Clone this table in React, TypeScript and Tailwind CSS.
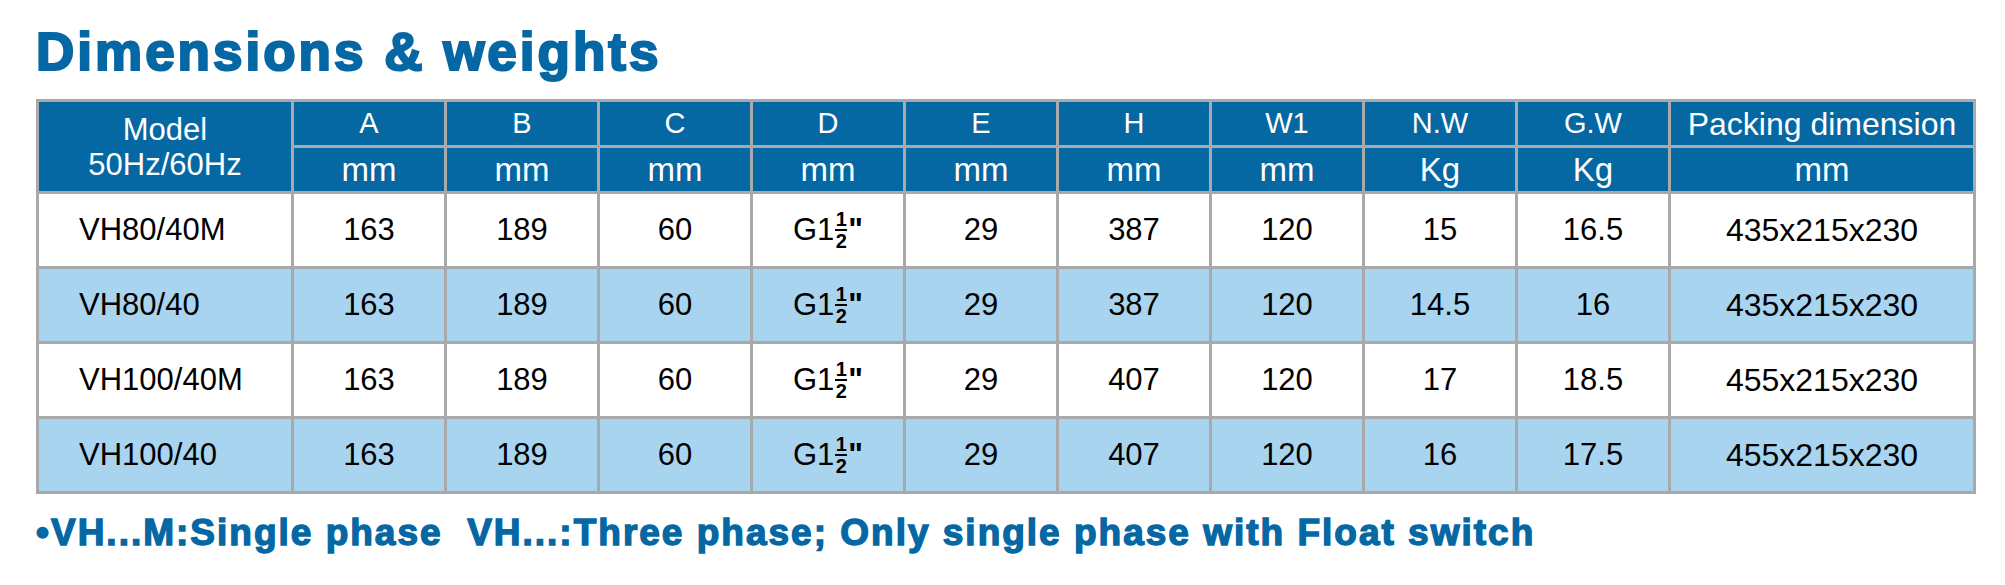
const columns = [
  { name: "A", unit: "mm" },
  { name: "B", unit: "mm" },
  { name: "C", unit: "mm" },
  { name: "D", unit: "mm" },
  { name: "E", unit: "mm" },
  { name: "H", unit: "mm" },
  { name: "W1", unit: "mm" },
  { name: "N.W", unit: "Kg" },
  { name: "G.W", unit: "Kg" },
]

const rows = [
  { model: "VH80/40M", h: "387", nw: "15", gw: "16.5", pack: "435x215x230" },
  { model: "VH80/40", h: "387", nw: "14.5", gw: "16", pack: "435x215x230" },
  { model: "VH100/40M", h: "407", nw: "17", gw: "18.5", pack: "455x215x230" },
  { model: "VH100/40", h: "407", nw: "16", gw: "17.5", pack: "455x215x230" },
]

function Thread() {
  return (
    <span className="inline-flex items-center">
      G1
      <span className="mx-[1px] inline-flex flex-col items-center text-[20px] leading-[20px] font-bold">
        <span>1</span>
        <span className="h-[2px] w-[12px] bg-black" />
        <span>2</span>
      </span>
      <span className="font-bold">"</span>
    </span>
  )
}

export default function App() {
  const cell = "border-[3px] border-[#a9a9a9] text-center"
  return (
    <div className="h-[585px] w-[2005px] bg-white pt-[25px] pl-[36px] [font-family:'Liberation_Sans',Arial,sans-serif]">
      <h1 className="text-[53px] leading-[53px] font-bold tracking-[3px] text-[#0567a3] [-webkit-text-stroke:2.2px_#0567a3]">
        Dimensions &amp; weights
      </h1>

      <table className="mt-[21px] border-collapse border-[3px] border-[#a9a9a9]">
        <thead className="bg-[#0568a3] text-white">
          <tr className="h-[46px]">
            <th rowSpan={2} className={`${cell} w-[255px] text-[31px] leading-[35px] font-normal`}>
              Model
              <br />
              50Hz/60Hz
            </th>
            {columns.map((col) => (
              <th key={col.name} className={`${cell} w-[153px] text-[29px] leading-none font-normal`}>
                {col.name}
              </th>
            ))}
            <th className={`${cell} w-[305px] text-[32px] leading-none font-normal`}>
              Packing dimension
            </th>
          </tr>
          <tr className="h-[46px]">
            {columns.map((col) => (
              <th key={col.name} className={`${cell} text-[33px] leading-none font-normal`}>
                {col.unit}
              </th>
            ))}
            <th className={`${cell} text-[33px] leading-none font-normal`}>mm</th>
          </tr>
        </thead>
        <tbody className="text-[31px] text-black">
          {rows.map((row, i) => (
            <tr key={row.model} className={i % 2 === 1 ? "h-[75px] bg-[#a9d4ef]" : "h-[75px] bg-white"}>
              <td className="border-[3px] border-[#a9a9a9] pl-[40px] text-left">{row.model}</td>
              <td className={cell}>163</td>
              <td className={cell}>189</td>
              <td className={cell}>60</td>
              <td className={cell}>
                <Thread />
              </td>
              <td className={cell}>29</td>
              <td className={cell}>{row.h}</td>
              <td className={cell}>120</td>
              <td className={cell}>{row.nw}</td>
              <td className={cell}>{row.gw}</td>
              <td className={`${cell} text-[32px]`}>{row.pack}</td>
            </tr>
          ))}
        </tbody>
      </table>

      <p className="mt-[20px] text-[37px] leading-[37px] font-bold tracking-[2px] whitespace-pre text-[#0567a3] [-webkit-text-stroke:1.4px_#0567a3]">
        •VH...M:Single phase  VH...:Three phase; Only single phase with Float switch
      </p>
    </div>
  )
}
